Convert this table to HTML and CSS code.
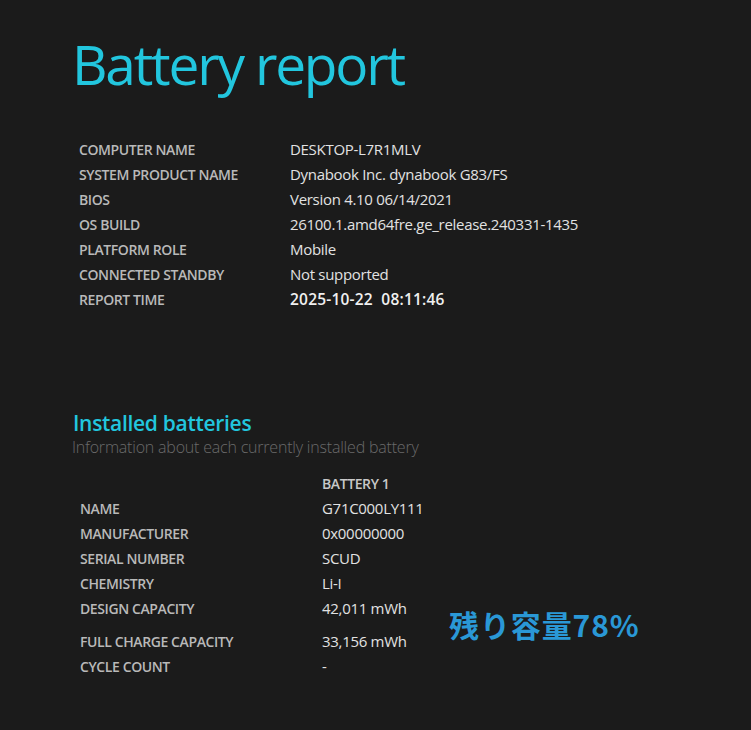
FILE: index.html
```html
<!DOCTYPE html>
<html>
<head>
<meta charset="utf-8">
<link rel="stylesheet" href="styles.css">
</head>
<body>
<div class="page">
  <h1 class="title">Battery report</h1>
  <div class="info">
    <div class="label">COMPUTER NAME</div><div class="value">DESKTOP-L7R1MLV</div>
    <div class="label">SYSTEM PRODUCT NAME</div><div class="value">Dynabook Inc. dynabook G83/FS</div>
    <div class="label">BIOS</div><div class="value">Version 4.10 06/14/2021</div>
    <div class="label">OS BUILD</div><div class="value">26100.1.amd64fre.ge_release.240331-1435</div>
    <div class="label">PLATFORM ROLE</div><div class="value">Mobile</div>
    <div class="label">CONNECTED STANDBY</div><div class="value">Not supported</div>
    <div class="label">REPORT TIME</div><div class="value strong">2025-10-22&nbsp;&nbsp;08:11:46</div>
  </div>
  <h2 class="section">Installed batteries</h2>
  <div class="subtitle">Information about each currently installed battery</div>
  <div class="battery">
    <div class="label"></div><div class="label head">BATTERY 1</div>
    <div class="label">NAME</div><div class="value">G71C000LY111</div>
    <div class="label">MANUFACTURER</div><div class="value">0x00000000</div>
    <div class="label">SERIAL NUMBER</div><div class="value">SCUD</div>
    <div class="label">CHEMISTRY</div><div class="value">Li-I</div>
    <div class="label">DESIGN CAPACITY</div><div class="value">42,011 mWh</div>
    <div class="label tall">FULL CHARGE CAPACITY</div><div class="value tall">33,156 mWh</div>
    <div class="label">CYCLE COUNT</div><div class="value">-</div>
  </div>
  <div class="note">残り容量78%</div>
</div>
</body>
</html>
```
FILE: styles.css
```css
html, body {
  margin: 0;
  padding: 0;
  background: #1b1b1b;
}
body {
  font-family: "Open Sans", "Noto Sans", sans-serif;
  color: #dcdcdc;
}
.page {
  position: relative;
  width: 751px;
  height: 730px;
  padding-left: 72px;
  box-sizing: border-box;
  overflow: hidden;
}
.title {
  margin: 0;
  padding-top: 28px;
  font-size: 55px;
  font-weight: 400;
  line-height: 72px;
  color: #22c6de;
  letter-spacing: -2.2px;
}
.info {
  display: grid;
  grid-template-columns: 211px auto;
  margin-top: 37px;
  margin-left: 7px;
}
.label {
  font-size: 14px;
  font-weight: 650;
  line-height: 25px;
  height: 25px;
  color: #b9b9b9;
  letter-spacing: -0.4px;
  white-space: nowrap;
}
.value {
  font-size: 15px;
  line-height: 25px;
  height: 25px;
  color: #e2e2e2;
  letter-spacing: -0.3px;
  white-space: nowrap;
}
.strong {
  font-weight: 600;
  font-size: 15.5px;
  color: #f0f0f0;
  letter-spacing: 0.2px;
}
.section {
  margin: 98px 0 0 1px;
  font-size: 21px;
  font-weight: 600;
  line-height: 26px;
  color: #22c6de;
  letter-spacing: -0.3px;
}
.subtitle {
  font-size: 16px;
  font-weight: 300;
  color: #6a6a6a;
  line-height: 22px;
  letter-spacing: -0.2px;
}
.battery {
  display: grid;
  grid-template-columns: 242px auto;
  margin-top: 13px;
  margin-left: 8px;
}
.battery .head {
  color: #c8c8c8;
}
.battery .tall {
  height: 33px;
  padding-top: 8px;
  box-sizing: border-box;
}
.note {
  position: absolute;
  left: 449px;
  top: 602px;
  font-family: "Noto Sans CJK JP", sans-serif;
  font-size: 30px;
  font-weight: 700;
  line-height: 44px;
  color: #2a98d6;
  letter-spacing: 0.9px;
}
```
